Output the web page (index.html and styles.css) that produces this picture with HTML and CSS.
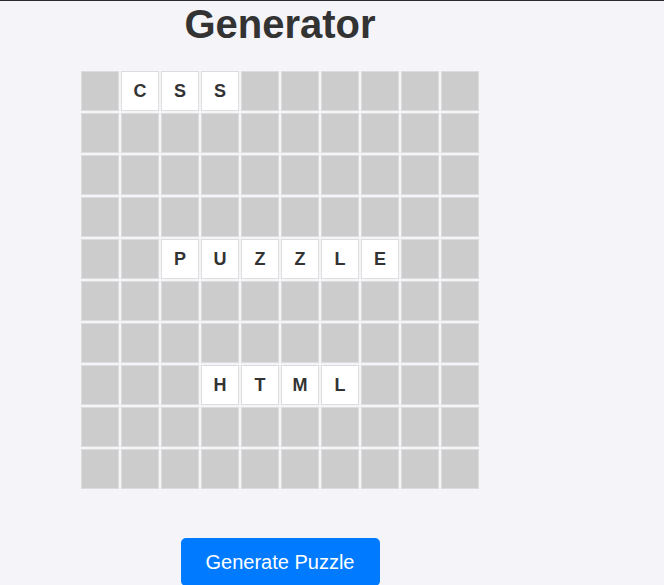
FILE: index.html
```html
<!DOCTYPE html>
<html>
<head>
<meta charset="utf-8">
<link rel="stylesheet" href="styles.css">
</head>
<body>
<div class="page">
  <h1 class="title">Generator</h1>
  <div class="grid">
    <div class="cell"></div><div class="cell on">C</div><div class="cell on">S</div><div class="cell on">S</div><div class="cell"></div><div class="cell"></div><div class="cell"></div><div class="cell"></div><div class="cell"></div><div class="cell"></div>
    <div class="cell"></div><div class="cell"></div><div class="cell"></div><div class="cell"></div><div class="cell"></div><div class="cell"></div><div class="cell"></div><div class="cell"></div><div class="cell"></div><div class="cell"></div>
    <div class="cell"></div><div class="cell"></div><div class="cell"></div><div class="cell"></div><div class="cell"></div><div class="cell"></div><div class="cell"></div><div class="cell"></div><div class="cell"></div><div class="cell"></div>
    <div class="cell"></div><div class="cell"></div><div class="cell"></div><div class="cell"></div><div class="cell"></div><div class="cell"></div><div class="cell"></div><div class="cell"></div><div class="cell"></div><div class="cell"></div>
    <div class="cell"></div><div class="cell"></div><div class="cell on">P</div><div class="cell on">U</div><div class="cell on">Z</div><div class="cell on">Z</div><div class="cell on">L</div><div class="cell on">E</div><div class="cell"></div><div class="cell"></div>
    <div class="cell"></div><div class="cell"></div><div class="cell"></div><div class="cell"></div><div class="cell"></div><div class="cell"></div><div class="cell"></div><div class="cell"></div><div class="cell"></div><div class="cell"></div>
    <div class="cell"></div><div class="cell"></div><div class="cell"></div><div class="cell"></div><div class="cell"></div><div class="cell"></div><div class="cell"></div><div class="cell"></div><div class="cell"></div><div class="cell"></div>
    <div class="cell"></div><div class="cell"></div><div class="cell"></div><div class="cell on">H</div><div class="cell on">T</div><div class="cell on">M</div><div class="cell on">L</div><div class="cell"></div><div class="cell"></div><div class="cell"></div>
    <div class="cell"></div><div class="cell"></div><div class="cell"></div><div class="cell"></div><div class="cell"></div><div class="cell"></div><div class="cell"></div><div class="cell"></div><div class="cell"></div><div class="cell"></div>
    <div class="cell"></div><div class="cell"></div><div class="cell"></div><div class="cell"></div><div class="cell"></div><div class="cell"></div><div class="cell"></div><div class="cell"></div><div class="cell"></div><div class="cell"></div>
  </div>
  <button class="generate">Generate Puzzle</button>
</div>
</body>
</html>
```

FILE: styles.css
```css
html, body {
  margin: 0;
  padding: 0;
  background: #f4f4f9;
}
body {
  border-top: 1px solid #2b2b2b;
  font-family: "Liberation Sans", Arial, sans-serif;
  color: #333;
}
.page {
  width: 398px;
  margin-left: 81px;
  display: flex;
  flex-direction: column;
  align-items: center;
}
.title {
  margin: 0;
  font-size: 40px;
  line-height: 46px;
  font-weight: bold;
  color: #333;
}
.grid {
  margin-top: 24px;
  display: grid;
  grid-template-columns: repeat(10, 38px);
  grid-auto-rows: 40px;
  gap: 2px;
}
.cell {
  box-sizing: border-box;
  background: #cccccc;
  border: 1px solid #dddddd;
  display: flex;
  align-items: center;
  justify-content: center;
  font-size: 18px;
  font-weight: bold;
  color: #333;
}
.cell.on {
  background: #ffffff;
}
.generate {
  margin-top: 49px;
  width: 199px;
  padding: 13px 0 12px;
  border: none;
  border-radius: 5px;
  background: #007bff;
  color: #fff;
  font-family: "Liberation Sans", Arial, sans-serif;
  font-size: 20px;
  line-height: 23px;
}
```
